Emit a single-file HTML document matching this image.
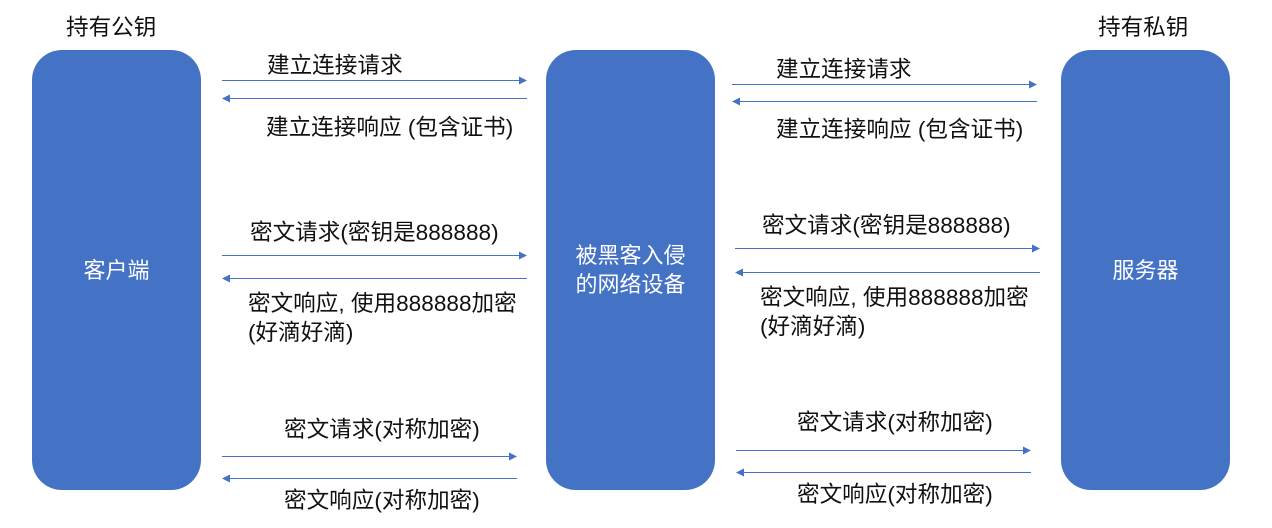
<!DOCTYPE html><html><head><meta charset="utf-8"><style>
body{margin:0;width:1272px;height:528px;background:#fff;position:relative;overflow:hidden;font-family:"Liberation Sans","Noto Sans CJK SC",sans-serif;}
.b{position:absolute;top:50px;height:440px;width:169px;background:#4472C4;border-radius:30px;color:#fff;font-size:22px;display:flex;align-items:center;justify-content:center;text-align:center;line-height:29px}
.t{position:absolute;font-size:22.6px;color:#111;white-space:nowrap;line-height:26px}
svg{position:absolute;left:0;top:0}
</style></head><body>
<div class="b" style="left:32px">客户端</div>
<div class="b" style="left:546px">被黑客入侵<br>的网络设备</div>
<div class="b" style="left:1061px">服务器</div>
<div class="t" style="left:66px;top:15px">持有公钥</div>
<div class="t" style="left:1098px;top:15px">持有私钥</div>
<div class="t" style="left:267px;top:53px">建立连接请求</div>
<div class="t" style="left:266px;top:115px">建立连接响应 (包含证书)</div>
<div class="t" style="left:776px;top:57px">建立连接请求</div>
<div class="t" style="left:776px;top:117px">建立连接响应 (包含证书)</div>
<div class="t" style="left:250px;top:220px">密文请求(密钥是888888)</div>
<div class="t" style="left:762px;top:213px">密文请求(密钥是888888)</div>
<div class="t" style="left:248px;top:291px">密文响应, 使用888888加密<br><span style="display:block;margin-top:3px">(好滴好滴)</span></div>
<div class="t" style="left:760px;top:285px">密文响应, 使用888888加密<br><span style="display:block;margin-top:3px">(好滴好滴)</span></div>
<div class="t" style="left:284px;top:417px">密文请求(对称加密)</div>
<div class="t" style="left:284px;top:488px">密文响应(对称加密)</div>
<div class="t" style="left:797px;top:410px">密文请求(对称加密)</div>
<div class="t" style="left:797px;top:482px">密文响应(对称加密)</div>
<svg width="1272" height="528" stroke="#4472C4" fill="#4472C4" stroke-width="1">
<g>
<line x1="222" y1="80.5" x2="522" y2="80.5"/><path d="M527 80.5 l-8 -4 v8z" stroke="none"/>
<line x1="227" y1="98.5" x2="527" y2="98.5"/><path d="M222 98.5 l8 -4 v8z" stroke="none"/>
<line x1="222" y1="255.5" x2="522" y2="255.5"/><path d="M527 255.5 l-8 -4 v8z" stroke="none"/>
<line x1="227" y1="278.5" x2="527" y2="278.5"/><path d="M222 278.5 l8 -4 v8z" stroke="none"/>
<line x1="222" y1="456.5" x2="512" y2="456.5"/><path d="M517 456.5 l-8 -4 v8z" stroke="none"/>
<line x1="227" y1="478.5" x2="517" y2="478.5"/><path d="M222 478.5 l8 -4 v8z" stroke="none"/>
<line x1="732" y1="84.5" x2="1032" y2="84.5"/><path d="M1037 84.5 l-8 -4 v8z" stroke="none"/>
<line x1="737" y1="101.5" x2="1037" y2="101.5"/><path d="M732 101.5 l8 -4 v8z" stroke="none"/>
<line x1="735" y1="248.5" x2="1035" y2="248.5"/><path d="M1040 248.5 l-8 -4 v8z" stroke="none"/>
<line x1="740" y1="272.5" x2="1040" y2="272.5"/><path d="M735 272.5 l8 -4 v8z" stroke="none"/>
<line x1="736" y1="450.5" x2="1026" y2="450.5"/><path d="M1031 450.5 l-8 -4 v8z" stroke="none"/>
<line x1="741" y1="472.5" x2="1031" y2="472.5"/><path d="M736 472.5 l8 -4 v8z" stroke="none"/>
</g></svg>
</body></html>
